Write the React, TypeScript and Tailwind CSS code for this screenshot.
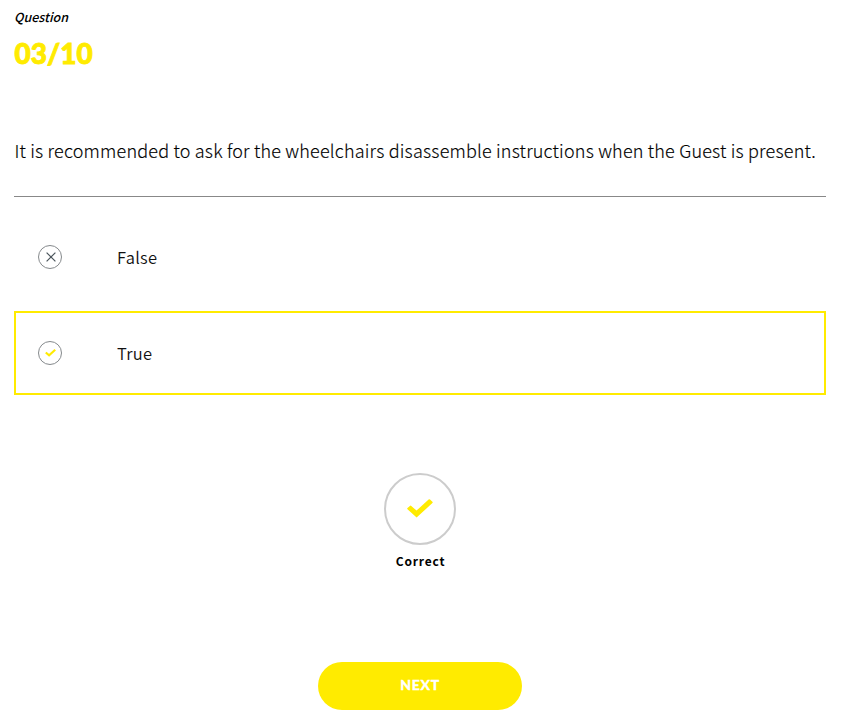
import type { ReactNode } from "react";

const sans = "font-['Noto_Sans_CJK_SC','Open_Sans',sans-serif]";

function Cross() {
  return (
    <svg className="ml-px" width="10" height="10" viewBox="0 0 10 10" fill="none" stroke="#4b555b" strokeWidth="1.2">
      <path d="M0.6 0.6 9.4 9.4M9.4 0.6 0.6 9.4" />
    </svg>
  );
}

function Tick({ className }: { className: string }) {
  return (
    <svg className={className} viewBox="0 0 26 19" fill="none" stroke="#ffeb00" strokeWidth="5" strokeLinejoin="miter">
      <path d="M1.8 8.2 9.7 15.2 24.2 2" />
    </svg>
  );
}

function RoundedTick() {
  return (
    <svg className="mb-[2px] h-[19px] w-[26px]" viewBox="0 0 26 19" fill="#ffeb00">
      <path d="M0.5 9.1 2.9 6.9Q3.6 6.3 4.3 6.9L9.5 11.6 21.6 0.6Q22.3 0 23 0.6L25.4 2.8Q26 3.4 25.4 4L9.6 18.6 0.5 10.3Q-0.1 9.7 0.5 9.1Z" />
    </svg>
  );
}

function Answer({ label, icon, selected }: { label: string; icon: ReactNode; selected?: boolean }) {
  return (
    <button
      className={
        selected
          ? "flex h-[84px] w-full items-center border-2 border-[#ffeb00] pl-[22px] text-left"
          : "flex h-[84px] w-full items-center border-2 border-transparent pl-[22px] text-left"
      }
    >
      <span className="flex size-6 items-center justify-center rounded-full border border-[#85898c]">{icon}</span>
      <span className="ml-[55px] text-[16.5px] font-[350] leading-6 tracking-[0.3px] text-[#111111]">{label}</span>
    </button>
  );
}

export default function App() {
  return (
    <main className={`h-[720px] overflow-hidden bg-white pl-[14px] pr-[18px] text-black ${sans}`}>
      <p className="pt-[7px] text-[12.5px] font-medium italic leading-5">Question</p>
      <p className="mt-2 pl-[0.5px] font-[Lato,sans-serif] text-[28px] font-black leading-9 text-[#ffeb00] [-webkit-text-stroke:0.9px_#ffeb00]">
        03/10
      </p>
      <h1 className="mt-[67px] whitespace-nowrap pl-[0.5px] text-[18px] font-light leading-6 tracking-[0.19px] text-black [-webkit-text-stroke:0.15px_#000000]">
        It is recommended to ask for the wheelchairs disassemble instructions when the Guest is present.
      </h1>
      <hr className="mt-[34px] border-t border-[#888888]" />
      <div className="mt-[18px] flex flex-col gap-3">
        <Answer label="False" icon={<Cross />} />
        <Answer label="True" icon={<Tick className="h-2 w-[11px]" />} selected />
      </div>
      <div className="mt-[78px] flex flex-col items-center">
        <div className="flex size-[72px] items-center justify-center rounded-full border-2 border-[#cccccc]">
          <RoundedTick />
        </div>
        <p className="mt-[6px] pl-px text-[12px] font-bold leading-5 tracking-[0.8px]">Correct</p>
      </div>
      <button className="mx-auto mt-[91px] flex h-12 w-[204px] items-center justify-center rounded-full bg-[#ffeb00] pb-[2px] font-[Lato,sans-serif] text-[14px] font-black leading-5 tracking-[0.7px] text-white [-webkit-text-stroke:0.3px_#ffffff]">
        NEXT
      </button>
    </main>
  );
}
